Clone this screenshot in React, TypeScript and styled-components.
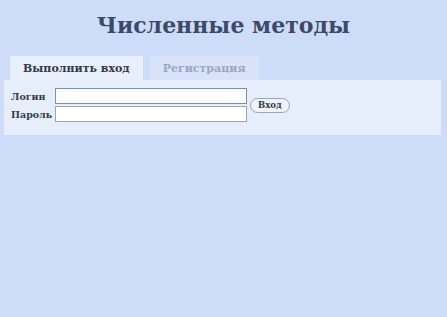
import { useState } from 'react'
import styled, { createGlobalStyle } from 'styled-components'

const GlobalStyle = createGlobalStyle`
    html, body {
        margin: 0;
        padding: 0;
        background: #cddcf8;
        font-family: "DejaVu Serif", "Liberation Serif", serif;
    }
`

const Page = styled.div`
    padding: 4px 4px 0 4px;
`

const Title = styled.h1`
    margin: 0;
    height: 52px;
    line-height: 43px;
    text-align: center;
    font-size: 22px;
    font-weight: bold;
    color: #3b4a6b;
`

const Tabs = styled.div`
    display: flex;
    gap: 7px;
    padding-left: 6px;
    height: 24px;
`

const Tab = styled.div<{ $active?: boolean }>`
    display: flex;
    align-items: center;
    justify-content: center;
    padding: 0 13px;
    font-size: 11px;
    font-weight: bold;
    background: ${props => props.$active ? '#e9f0fd' : '#d8e3fa'};
    color: ${props => props.$active ? '#333a48' : '#9ba7c0'};
    cursor: pointer;
`

const Panel = styled.div`
    background: #e6eefc;
    height: 55px;
    width: 437px;
    display: flex;
    align-items: flex-start;
    padding: 8px 7px 0;
    box-sizing: border-box;
`

const Row = styled.div`
    display: flex;
    align-items: center;
    gap: 3px;
`

const Form = styled.div`
    display: grid;
    grid-template-columns: 44px 192px;
    row-gap: 2px;
    align-items: center;
`

const Label = styled.label`
    font-size: 9.5px;
    font-weight: bold;
    color: #333a48;
`

const Input = styled.input`
    height: 16px;
    box-sizing: border-box;
    border: 1px solid #9aa5b8;
    background: #ffffff;
    padding: 0 2px;
    font-size: 11px;
    outline: none;
    &:focus {
        border-color: #7d8fb0;
    }
`

const Button = styled.button`
    height: 15px;
    padding: 0 7px;
    border: 1px solid #9aa5b8;
    border-radius: 8px;
    background: #eef2fa;
    font-family: "DejaVu Serif", serif;
    font-size: 8.5px;
    font-weight: bold;
    color: #333a48;
    cursor: pointer;
`

export default function App() {
    const [tab, setTab] = useState(0)

    return (
        <>
            <GlobalStyle />
            <Page>
                <Title>Численные методы</Title>
                <Tabs>
                    <Tab $active={tab === 0} onClick={() => setTab(0)}>Выполнить вход</Tab>
                    <Tab $active={tab === 1} onClick={() => setTab(1)}>Регистрация</Tab>
                </Tabs>
                <Panel>
                    <Row>
                        <Form>
                            <Label>Логин</Label>
                            <Input type="text" autoFocus />
                            <Label>Пароль</Label>
                            <Input type="password" />
                        </Form>
                        <Button>Вход</Button>
                    </Row>
                </Panel>
            </Page>
        </>
    )
}
